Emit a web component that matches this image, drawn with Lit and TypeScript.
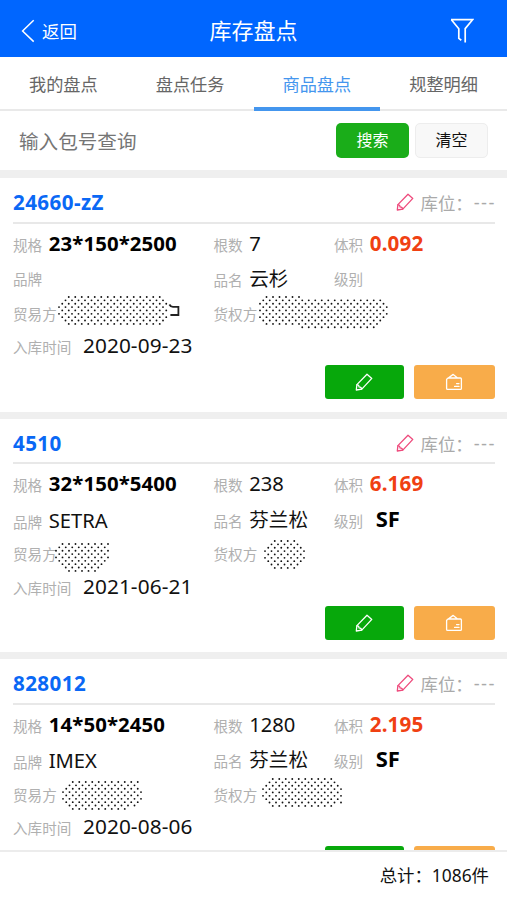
import { LitElement, html, svg, css } from "lit";
import { customElement, property } from "lit/decorators.js";

type Patch = { x: number; y: number; rows: [number, number][]; tail?: boolean };
type Item = {
  code: string; spec: string; count: string; volume: string; brand: string;
  name: string; grade: string; date: string; trader: Patch; owner: Patch;
};

const ITEMS: Item[] = [
  {
    code: "24660-zZ", spec: "23*150*2500", count: "7", volume: "0.092", brand: "", name: "云杉", grade: "", date: "2020-09-23",
    trader: { x: 46, y: 0, tail: true, rows: [[3, 15], [2, 16], [1, 17], [0, 17], [1, 17], [0, 17], [1, 17], [2, 16], [3, 15]] },
    owner: { x: 46, y: 0, rows: [[2, 6], [1, 19], [0, 20], [1, 20], [0, 20], [1, 20], [0, 20], [1, 19], [2, 18], [13, 12]] },
  },
  {
    code: "4510", spec: "32*150*5400", count: "238", volume: "6.169", brand: "SETRA", name: "芬兰松", grade: "SF", date: "2021-06-21",
    trader: { x: 43, y: 6.5, rows: [[2, 8], [1, 8], [0, 9], [1, 8], [0, 9], [1, 8], [2, 7], [3, 6], [4, 5]] },
    owner: { x: 51.5, y: 4, rows: [[3, 4], [2, 5], [1, 6], [0, 7], [1, 6], [0, 7], [1, 6], [2, 5], [3, 4]] },
  },
  {
    code: "828012", spec: "14*50*2450", count: "1280", volume: "2.195", brand: "IMEX", name: "芬兰松", grade: "SF", date: "2020-08-06",
    trader: { x: 50, y: 4.6, rows: [[3, 11], [2, 11], [1, 12], [0, 13], [1, 12], [0, 13], [1, 12], [2, 11], [3, 9]] },
    owner: { x: 49, y: 1.4, rows: [[3, 10], [2, 11], [1, 12], [0, 13], [1, 12], [0, 13], [1, 12], [2, 12], [3, 10]] },
  },
];

const pencil = html`<svg width="18" height="18" viewBox="0 0 18 18" fill="none" stroke="currentColor" stroke-width="1.3" stroke-linejoin="round" stroke-linecap="round">
  <path d="M12 1.3 16.8 5.4 6.8 16.1 1.3 17 1.9 11.6Z"/><path d="M1.9 11.8Q4 11.6 4 13.9 6.4 13.9 6.6 16"/></svg>`;

const box = html`<svg width="18" height="18" viewBox="0 0 18 18" fill="none" stroke="currentColor" stroke-width="1.3" stroke-linejoin="round" stroke-linecap="round">
  <path d="M3 5H15.4Q16.4 5 16.4 6V15.4Q16.4 16.4 15.4 16.4H2.6Q1.6 16.4 1.6 15.4V6.2L8.2 1.4 12.6 5"/><path d="M11.6 10.6H14M9.6 13.4H14"/></svg>`;

/** Staggered dot screen that hides a company name. */
@customElement("dot-mask")
class DotMask extends LitElement {
  @property({ attribute: false }) patch!: Patch;
  static styles = css`
    :host { display: block; }
    svg { display: block; overflow: visible; }
    .dots { fill: #111; }
    .tail { fill: none; stroke: #222; stroke-width: 1.8; }
  `;
  render() {
    const dots = this.patch.rows.flatMap(([start, n], r) =>
      Array.from({ length: n }, (_, i) => svg`<circle cx=${3.25 * start + 6.5 * i} cy=${3.36 * r} r="0.92"/>`));
    return html`<svg width="130" height="32"><g class="dots">${dots}</g>
      ${this.patch.tail ? svg`<path class="tail" d="M110.4 7.5Q111.6 9.9 114 9.9H119.4V18H111.4"/>` : ""}</svg>`;
  }
}

@customElement("stock-card")
class StockCard extends LitElement {
  @property({ attribute: false }) item!: Item;
  static styles = css`
    :host { display: block; box-sizing: border-box; height: 240.5px; flex: none; padding: 0 12.5px 0 13px; background: #fff;
      border-bottom: 7.5px solid #efefef; }
    .head { display: flex; justify-content: space-between; height: 43.5px; border-bottom: 2px solid #e8e8e8; line-height: 49px; }
    .code { color: #0a68f5; font-weight: 700; font-size: 20.6px; letter-spacing: 0.4px; }
    .loc { display: flex; align-items: center; height: 51px; color: #aaa; font-size: 17.4px; }
    .pen { color: #ee4a7c; display: flex; margin: 0 7px 3px 0; }
    .dash { font-family: "Liberation Sans", sans-serif; font-size: 18px; letter-spacing: 1.4px; margin: 0 -1.4px 0 1px; }
    .row { display: grid; grid-template-columns: 200.5px 120.5px 1fr; height: 36.5px; line-height: 38px; }
    .row.third { height: 33.5px; line-height: 35px; }
    .row.fourth { height: 31px; line-height: 31px; }
    .cell { position: relative; display: flex; align-items: baseline; white-space: nowrap; }
    .label { color: #b0b0b0; font-size: 14.6px; margin-right: 6.5px; }
    .value { color: #111; font-size: 20.2px; }
    .name { font-size: 19.6px; }
    .bold { font-weight: 700; color: #000; font-size: 20.4px; letter-spacing: 0.1px; }
    .volume { font-weight: 700; color: #f04012; font-size: 20.6px; letter-spacing: 0.15px; }
    .grade { font-weight: 700; color: #000; font-size: 22px; margin-left: 6px; line-height: 34px; }
    .date { font-size: 20.8px; letter-spacing: 0.1px; margin-left: 5px; }
    .mask { position: absolute; }
    .actions { display: flex; justify-content: flex-end; gap: 10px; padding-top: 4px; }
    .btn { width: 79.5px; height: 34px; border-radius: 3px; display: flex; align-items: center; justify-content: center; color: #fff; background: #07a80b; }
    .btn.orange { width: 80.5px; background: #f8ac4a; }
  `;
  private mask(p: Patch) {
    return html`<dot-mask class="mask" style="left:${p.x}px;top:${p.y}px" .patch=${p}></dot-mask>`;
  }
  render() {
    const d = this.item;
    return html`
      <div class="head"><span class="code">${d.code}</span>
        <span class="loc"><span class="pen">${pencil}</span>库位：<span class="dash">---</span></span></div>
      <div class="row">
        <div class="cell"><span class="label">规格</span><span class="value bold">${d.spec}</span></div>
        <div class="cell"><span class="label">根数</span><span class="value">${d.count}</span></div>
        <div class="cell"><span class="label">体积</span><span class="value volume">${d.volume}</span></div>
      </div>
      <div class="row">
        <div class="cell"><span class="label">品牌</span><span class="value">${d.brand}</span></div>
        <div class="cell"><span class="label">品名</span><span class="value name">${d.name}</span></div>
        <div class="cell"><span class="label">级别</span><span class="value grade">${d.grade}</span></div>
      </div>
      <div class="row third">
        <div class="cell"><span class="label">贸易方</span>${this.mask(d.trader)}</div>
        <div class="cell"><span class="label">货权方</span>${this.mask(d.owner)}</div>
      </div>
      <div class="row fourth">
        <div class="cell"><span class="label">入库时间</span><span class="value date">${d.date}</span></div>
      </div>
      <div class="actions"><div class="btn">${pencil}</div><div class="btn orange">${box}</div></div>`;
  }
}

@customElement("app-root")
class AppRoot extends LitElement {
  static styles = css`
    :host { display: flex; flex-direction: column; height: 900px; overflow: hidden; background: #fff;
      font-family: "Noto Sans", "Noto Sans CJK SC", sans-serif; }
    .bar { flex: none; height: 57px; background: #0066ff; color: #fff; display: grid; grid-template-columns: 1fr auto 1fr; align-items: center; padding: 0 33px 0 21px; box-sizing: border-box; }
    .back { display: flex; align-items: center; gap: 7px; font-size: 17.4px; line-height: 24px; padding-top: 4px; }
    .title { font-size: 22px; line-height: 30px; padding-top: 2px; transform: translateX(6px); }
    .filter { display: flex; justify-content: flex-end; padding-top: 4px; }
    .tabs { flex: none; height: 54px; box-sizing: border-box; border-bottom: 2px solid #e9e9e9; display: grid; grid-template-columns: repeat(4, 1fr); }
    .tab { text-align: center; font-size: 17.2px; line-height: 56px; color: #666; height: 54px; box-sizing: border-box; }
    .tab.on { color: #4496ee; border-bottom: 4px solid #4496ee; }
    .search { flex: none; height: 60px; display: flex; align-items: center; padding: 0 19px; box-sizing: border-box; padding-bottom: 1px; }
    .hint { flex: 1; font-size: 19.6px; color: #757575; padding-bottom: 1px; }
    .btn { width: 73px; height: 35px; box-sizing: border-box; border-radius: 5px; text-align: center; font-size: 16px; line-height: 35px; color: #fff; background: #1aad19; }
    .btn.plain { margin-left: 6px; line-height: 33px; background: #f8f8f8; color: #111; border: 1px solid #ededed; }
    .list { flex: 1; min-height: 0; overflow: hidden; display: flex; flex-direction: column; border-top: 8px solid #efefef; margin-top: -1px; }
    .foot { flex: none; height: 50px; box-sizing: border-box; border-top: 2px solid #ececec; background: #fff; text-align: right; padding-right: 18px; line-height: 47px; font-size: 17.4px; color: #111; }
  `;
  render() {
    return html`
      <div class="bar">
        <div class="back"><svg width="14" height="24" viewBox="0 0 14 24" fill="none" stroke="#fff" stroke-width="1.5"><path d="M12.7 1.2 1.6 12 12.7 22.6"/></svg>返回</div>
        <div class="title">库存盘点</div>
        <div class="filter"><svg width="24" height="26" viewBox="0 0 24 26" fill="none" stroke="#fff" stroke-width="1.7"><path d="M1 1.7H22.6L15.2 10.6V24.6M1.4 1.8 8.8 10.8V20.4L11.3 22.2"/></svg></div>
      </div>
      <div class="tabs">
        <div class="tab">我的盘点</div><div class="tab">盘点任务</div><div class="tab on">商品盘点</div><div class="tab">规整明细</div>
      </div>
      <div class="search"><div class="hint">输入包号查询</div><div class="btn">搜索</div><div class="btn plain">清空</div></div>
      <div class="list">${ITEMS.map((i) => html`<stock-card .item=${i}></stock-card>`)}</div>
      <div class="foot">总计：1086件</div>`;
  }
}
